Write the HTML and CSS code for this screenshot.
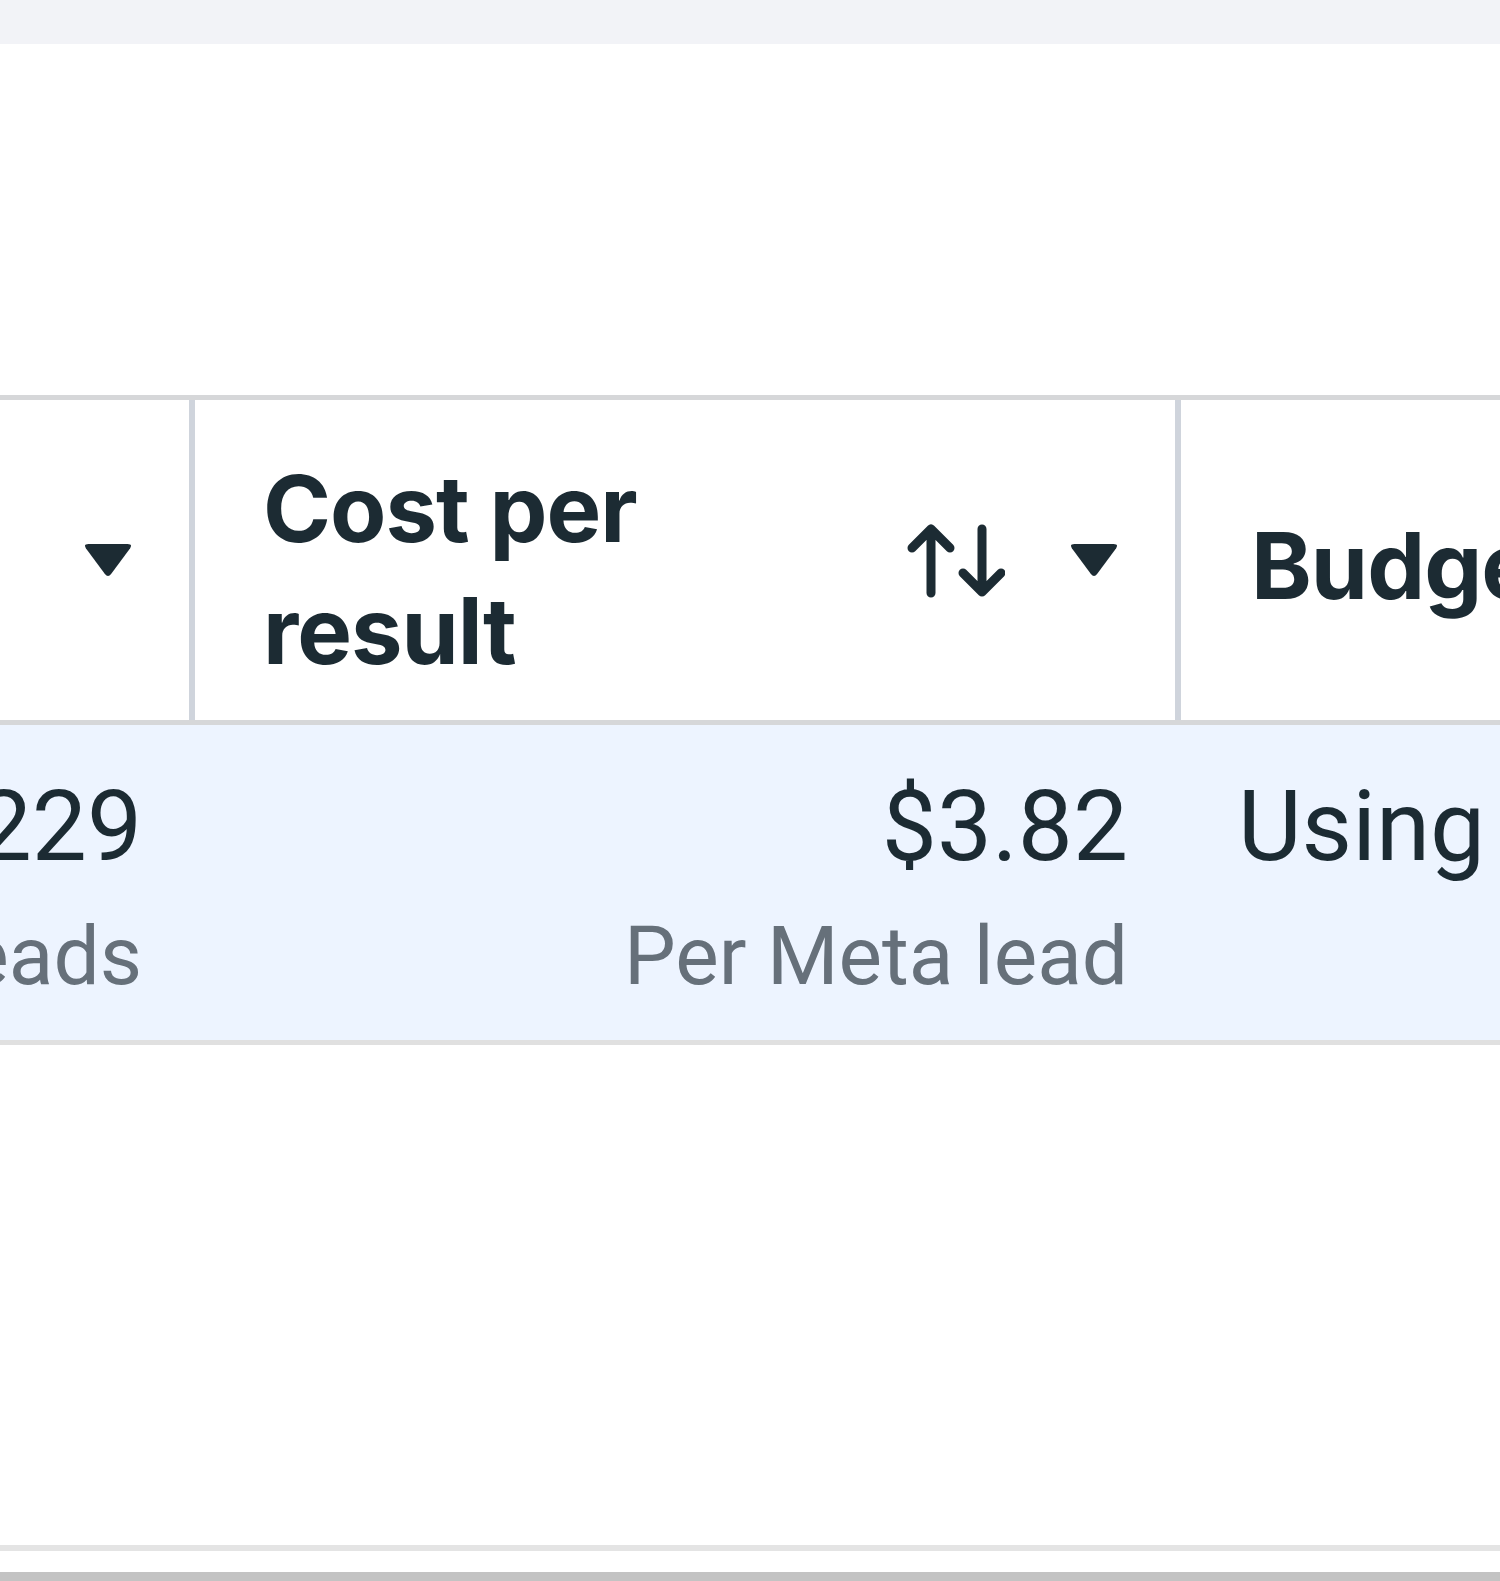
FILE: index.html
```html
<!DOCTYPE html>
<html lang="en">
<head>
<meta charset="utf-8">
<title>Ad sets</title>
<link rel="stylesheet" href="styles.css">
</head>
<body>
<div class="topbar"></div>

<div class="table">
  <div class="thead">
    <div class="th th-first">
      <span class="th-label">Results</span>
      <svg class="caret" viewBox="0 0 48 33" aria-hidden="true"><path d="M5 1H43Q48 1 45.5 5L27 30Q24 34 21 30L2.5 5Q0 1 5 1Z"/></svg>
    </div>
    <div class="th th-cost">
      <span class="th-label">Cost per result</span>
      <svg class="sort" viewBox="0 0 98 75" aria-hidden="true">
        <path d="M24 70V6M5 25L24 6L43 25"/>
        <path d="M75 6V69M56 50L75 69L94 50"/>
      </svg>
      <svg class="caret caret-end" viewBox="0 0 48 33" aria-hidden="true"><path d="M5 1H43Q48 1 45.5 5L27 30Q24 34 21 30L2.5 5Q0 1 5 1Z"/></svg>
    </div>
    <div class="th th-budget">
      <span class="th-label">Budget</span>
    </div>
  </div>

  <div class="trow">
    <div class="td td-num">
      <span class="num">1,229</span>
      <span class="sub">Meta leads</span>
    </div>
    <div class="td td-num">
      <span class="num">$3.82</span>
      <span class="sub">Per Meta lead</span>
    </div>
    <div class="td td-text">
      <span class="num">Using ad set budget</span>
    </div>
  </div>
</div>

<div class="footer">
  <div class="footer-rule"></div>
  <div class="footer-bar"></div>
</div>
</body>
</html>
```

FILE: styles.css
```css
html, body {
  margin: 0;
  padding: 0;
}

body {
  width: 1500px;
  height: 1581px;
  overflow: hidden;
  background: #ffffff;
  font-family: Roboto, "Liberation Sans", sans-serif;
  color: #1c2b33;
}

.topbar {
  height: 44px;
  background: #f2f3f7;
}

/* table */
.table {
  margin-top: 351px;
  width: 1500px;
}

.thead,
.trow {
  display: grid;
  grid-template-columns: 189px 986px 325px;
}

.thead {
  height: 330px;
  box-sizing: border-box;
  border-top: 5px solid #d6d7d9;
  border-bottom: 5px solid #d6d7d9;
}

.th {
  display: flex;
  align-items: center;
  min-width: 0;
  box-sizing: border-box;
}

.th + .th {
  border-left: 6px solid #cfd4dc;
}

.th-label {
  font-family: Inter, "Noto Sans", sans-serif;
  font-weight: 700;
  font-size: 92px;
  line-height: 122px;
  letter-spacing: -1px;
  color: #1c2b33;
  padding-top: 20px;
}

.th-first {
  justify-content: flex-end;
  padding-right: 56px;
  overflow: visible;
}

.th-first .th-label {
  display: none;
}

.th-cost {
  padding: 0 56px 0 68px;
}

.th-cost .th-label {
  max-width: 440px;
}

.th-budget {
  padding-left: 70px;
  overflow: hidden;
  white-space: nowrap;
}

.th-budget .th-label {
  padding-top: 12px;
}

.caret {
  width: 50px;
  height: 34px;
  fill: #1c2b33;
  flex: none;
}

.caret-end {
  margin-left: 64px;
}

.sort {
  width: 98px;
  height: 75px;
  margin-left: auto;
  flex: none;
  fill: none;
  stroke: #1c2b33;
  stroke-width: 9;
  stroke-linecap: round;
  stroke-linejoin: round;
}

/* data row */
.trow {
  height: 320px;
  box-sizing: border-box;
  background: #edf4ff;
  border-bottom: 5px solid #e0e0e0;
}

.td {
  display: flex;
  flex-direction: column;
  min-width: 0;
  padding-top: 44px;
  white-space: nowrap;
}

.td-num {
  align-items: flex-end;
  padding-right: 47px;
}

.td-text {
  align-items: flex-start;
  padding-left: 63px;
  overflow: hidden;
}

.num {
  font-size: 98px;
  line-height: 116px;
  color: #1c2b33;
}

.sub {
  margin-top: 21px;
  font-size: 82px;
  line-height: 100px;
  color: #66707a;
}

/* bottom edge */
.footer {
  margin-top: 500px;
}

.footer-rule {
  height: 6px;
  background: #e4e4e4;
}

.footer-bar {
  margin-top: 21px;
  height: 11px;
  background: #c3c3c3;
}
```
